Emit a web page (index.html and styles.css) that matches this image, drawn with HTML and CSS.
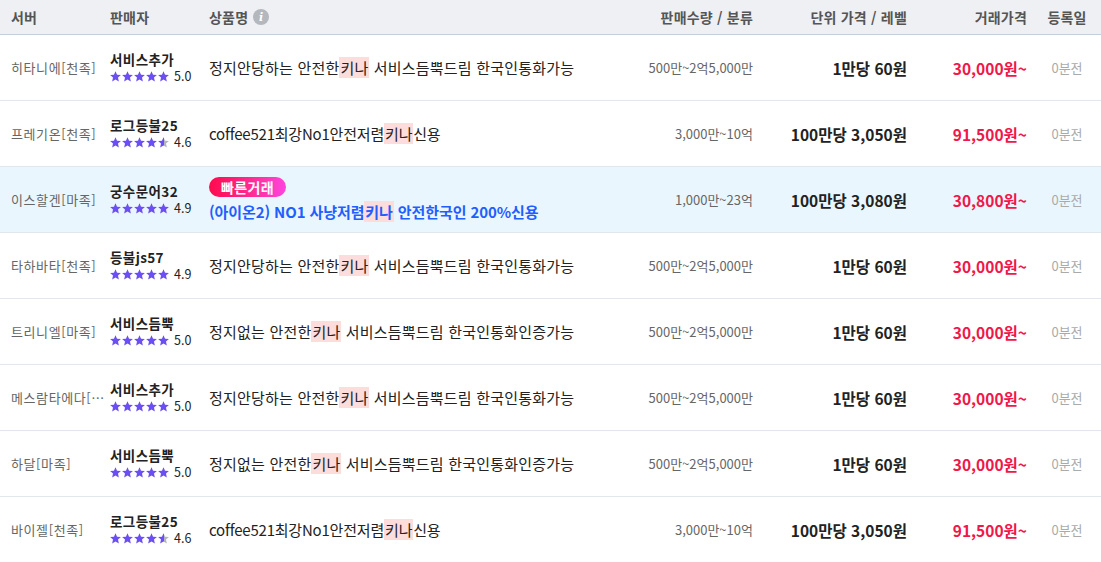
FILE: index.html
```html
<!DOCTYPE html>
<html lang="ko">
<head>
<meta charset="utf-8">
<link rel="stylesheet" href="styles.css">
</head>
<body>
<svg class="defs" width="0" height="0" aria-hidden="true">
  <defs>
    <symbol id="star" viewBox="0 0 10 10">
      <path d="M5 0.2 L6.4 3.35 L9.9 3.65 L7.25 5.95 L8.05 9.5 L5 7.65 L1.95 9.5 L2.75 5.95 L0.1 3.65 L3.6 3.35 Z"/>
    </symbol>
    <linearGradient id="half" x1="0" x2="1" y1="0" y2="0">
      <stop offset="0.55" stop-color="#6b4ff2"/>
      <stop offset="0.55" stop-color="#b4b4bf"/>
    </linearGradient>
  </defs>
</svg>
<div class="table">
  <div class="row head">
    <div class="c server">서버</div>
    <div class="c seller">판매자</div>
    <div class="c product">상품명 <span class="info">i</span></div>
    <div class="c qty">판매수량 / 분류</div>
    <div class="c unit">단위 가격 / 레벨</div>
    <div class="c price">거래가격</div>
    <div class="c date">등록일</div>
  </div>

  <div class="row">
    <div class="c server">히타니에[천족]</div>
    <div class="c seller"><div class="name">서비스추가</div><div class="rating"><svg class="stars" viewBox="0 0 60 11"><use href="#star" x="0" width="11" height="11"/><use href="#star" x="12" width="11" height="11"/><use href="#star" x="24" width="11" height="11"/><use href="#star" x="36" width="11" height="11"/><use href="#star" x="48" width="11" height="11"/></svg><span>5.0</span></div></div>
    <div class="c product"><div class="title">정지안당하는 안전한<mark>키나</mark> 서비스듬뿍드림 한국인통화가능</div></div>
    <div class="c qty">500만~2억5,000만</div>
    <div class="c unit">1만당 60원</div>
    <div class="c price">30,000원~</div>
    <div class="c date">0분전</div>
  </div>

  <div class="row">
    <div class="c server">프레기온[천족]</div>
    <div class="c seller"><div class="name">로그등불25</div><div class="rating"><svg class="stars" viewBox="0 0 60 11"><use href="#star" x="0" width="11" height="11"/><use href="#star" x="12" width="11" height="11"/><use href="#star" x="24" width="11" height="11"/><use href="#star" x="36" width="11" height="11"/><use href="#star" class="half" x="48" width="11" height="11"/></svg><span>4.6</span></div></div>
    <div class="c product"><div class="title latin">coffee521최강No1안전저렴<mark>키나</mark>신용</div></div>
    <div class="c qty">3,000만~10억</div>
    <div class="c unit">100만당 3,050원</div>
    <div class="c price">91,500원~</div>
    <div class="c date">0분전</div>
  </div>

  <div class="row hl">
    <div class="c server">이스할겐[마족]</div>
    <div class="c seller"><div class="name">궁수문어32</div><div class="rating"><svg class="stars" viewBox="0 0 60 11"><use href="#star" x="0" width="11" height="11"/><use href="#star" x="12" width="11" height="11"/><use href="#star" x="24" width="11" height="11"/><use href="#star" x="36" width="11" height="11"/><use href="#star" x="48" width="11" height="11"/></svg><span>4.9</span></div></div>
    <div class="c product"><span class="badge">빠른거래</span><div class="title fast">(아이온2) NO1 사냥저렴<mark>키나</mark> 안전한국인 200%신용</div></div>
    <div class="c qty">1,000만~23억</div>
    <div class="c unit">100만당 3,080원</div>
    <div class="c price">30,800원~</div>
    <div class="c date">0분전</div>
  </div>

  <div class="row">
    <div class="c server">타하바타[천족]</div>
    <div class="c seller"><div class="name">등불js57</div><div class="rating"><svg class="stars" viewBox="0 0 60 11"><use href="#star" x="0" width="11" height="11"/><use href="#star" x="12" width="11" height="11"/><use href="#star" x="24" width="11" height="11"/><use href="#star" x="36" width="11" height="11"/><use href="#star" x="48" width="11" height="11"/></svg><span>4.9</span></div></div>
    <div class="c product"><div class="title">정지안당하는 안전한<mark>키나</mark> 서비스듬뿍드림 한국인통화가능</div></div>
    <div class="c qty">500만~2억5,000만</div>
    <div class="c unit">1만당 60원</div>
    <div class="c price">30,000원~</div>
    <div class="c date">0분전</div>
  </div>

  <div class="row">
    <div class="c server">트리니엘[마족]</div>
    <div class="c seller"><div class="name">서비스듬뿍</div><div class="rating"><svg class="stars" viewBox="0 0 60 11"><use href="#star" x="0" width="11" height="11"/><use href="#star" x="12" width="11" height="11"/><use href="#star" x="24" width="11" height="11"/><use href="#star" x="36" width="11" height="11"/><use href="#star" x="48" width="11" height="11"/></svg><span>5.0</span></div></div>
    <div class="c product"><div class="title">정지없는 안전한<mark>키나</mark> 서비스듬뿍드림 한국인통화인증가능</div></div>
    <div class="c qty">500만~2억5,000만</div>
    <div class="c unit">1만당 60원</div>
    <div class="c price">30,000원~</div>
    <div class="c date">0분전</div>
  </div>

  <div class="row">
    <div class="c server">메스람타에다[마족]</div>
    <div class="c seller"><div class="name">서비스추가</div><div class="rating"><svg class="stars" viewBox="0 0 60 11"><use href="#star" x="0" width="11" height="11"/><use href="#star" x="12" width="11" height="11"/><use href="#star" x="24" width="11" height="11"/><use href="#star" x="36" width="11" height="11"/><use href="#star" x="48" width="11" height="11"/></svg><span>5.0</span></div></div>
    <div class="c product"><div class="title">정지안당하는 안전한<mark>키나</mark> 서비스듬뿍드림 한국인통화가능</div></div>
    <div class="c qty">500만~2억5,000만</div>
    <div class="c unit">1만당 60원</div>
    <div class="c price">30,000원~</div>
    <div class="c date">0분전</div>
  </div>

  <div class="row">
    <div class="c server">하달[마족]</div>
    <div class="c seller"><div class="name">서비스듬뿍</div><div class="rating"><svg class="stars" viewBox="0 0 60 11"><use href="#star" x="0" width="11" height="11"/><use href="#star" x="12" width="11" height="11"/><use href="#star" x="24" width="11" height="11"/><use href="#star" x="36" width="11" height="11"/><use href="#star" x="48" width="11" height="11"/></svg><span>5.0</span></div></div>
    <div class="c product"><div class="title">정지없는 안전한<mark>키나</mark> 서비스듬뿍드림 한국인통화인증가능</div></div>
    <div class="c qty">500만~2억5,000만</div>
    <div class="c unit">1만당 60원</div>
    <div class="c price">30,000원~</div>
    <div class="c date">0분전</div>
  </div>

  <div class="row">
    <div class="c server">바이젤[천족]</div>
    <div class="c seller"><div class="name">로그등불25</div><div class="rating"><svg class="stars" viewBox="0 0 60 11"><use href="#star" x="0" width="11" height="11"/><use href="#star" x="12" width="11" height="11"/><use href="#star" x="24" width="11" height="11"/><use href="#star" x="36" width="11" height="11"/><use href="#star" class="half" x="48" width="11" height="11"/></svg><span>4.6</span></div></div>
    <div class="c product"><div class="title latin">coffee521최강No1안전저렴<mark>키나</mark>신용</div></div>
    <div class="c qty">3,000만~10억</div>
    <div class="c unit">100만당 3,050원</div>
    <div class="c price">91,500원~</div>
    <div class="c date">0분전</div>
  </div>
</div>
</body>
</html>
```

FILE: styles.css
```css
* { box-sizing: border-box; }
html, body { margin: 0; padding: 0; background: #fff; }
body {
  font-family: "Noto Sans CJK KR", "Noto Sans", sans-serif;
  color: #222;
  overflow: hidden;
}
.defs { position: absolute; width: 0; height: 0; }

.table { width: 1101px; }

.row {
  display: grid;
  grid-template-columns: 110px 99px 391px 153px 154px 126px 68px;
  align-items: center;
  height: 66px;
  border-bottom: 1px solid #e2e7ed;
}
.row.head {
  height: 35px;
  background: #eef0f4;
  border-bottom: 1px solid #c6cddb;
  font-size: 14px;
  font-weight: 700;
  color: #555;
}
.row.hl { background: #eaf6fd; }

.c { min-width: 0; white-space: nowrap; }

.server {
  padding-left: 11px;
  padding-right: 4px;
  overflow: hidden;
  text-overflow: ellipsis;
  font-size: 13px;
  letter-spacing: 0.6px;
  color: #666;
}
.head .c { color: #555; font-size: 14px; font-weight: 700; letter-spacing: 0.2px; }

.seller { display: flex; flex-direction: column; }
.name { font-size: 13.5px; font-weight: 700; color: #222; line-height: 17px; letter-spacing: 0.4px; }
.rating { display: flex; align-items: center; gap: 4px; line-height: 16px; font-size: 12.5px; color: #222; }
.stars { width: 60px; height: 11px; fill: #6b4ff2; display: block; }
.stars .half { fill: url(#half); }

.product { display: flex; flex-direction: column; align-items: flex-start; }
.head .product { flex-direction: row; align-items: center; gap: 5px; }
.title { font-size: 15px; line-height: 20px; color: #222; letter-spacing: 0.2px; }
.title.latin { letter-spacing: -0.2px; }
.title mark {
  background: #fddcdc;
  color: inherit;
  padding: 0 1px;
}
.title.fast { color: #1f5fff; font-weight: 700; margin-top: 5px; letter-spacing: -0.1px; }
.badge {
  display: inline-block;
  height: 20px;
  line-height: 20px;
  padding: 0 12px;
  border-radius: 10px;
  background: linear-gradient(90deg, #ff0a4e 0%, #ff2e9a 60%, #ff45e0 100%);
  color: #fff;
  font-size: 14px;
  font-weight: 700;
  letter-spacing: 0.4px;
}
.info {
  display: inline-flex;
  align-items: center;
  justify-content: center;
  width: 16px;
  height: 16px;
  border-radius: 50%;
  background: #b4b7be;
  color: #fff;
  font-family: "DejaVu Serif", serif;
  font-style: italic;
  font-size: 11px;
  font-weight: 700;
}

.qty { text-align: right; font-size: 13px; color: #666; }
.unit { text-align: right; font-size: 15.5px; font-weight: 700; color: #222; }
.price { text-align: right; padding-right: 6px; font-size: 15.5px; font-weight: 700; color: #f0174a; }
.date { text-align: center; font-size: 13px; color: #aaa; }
```
